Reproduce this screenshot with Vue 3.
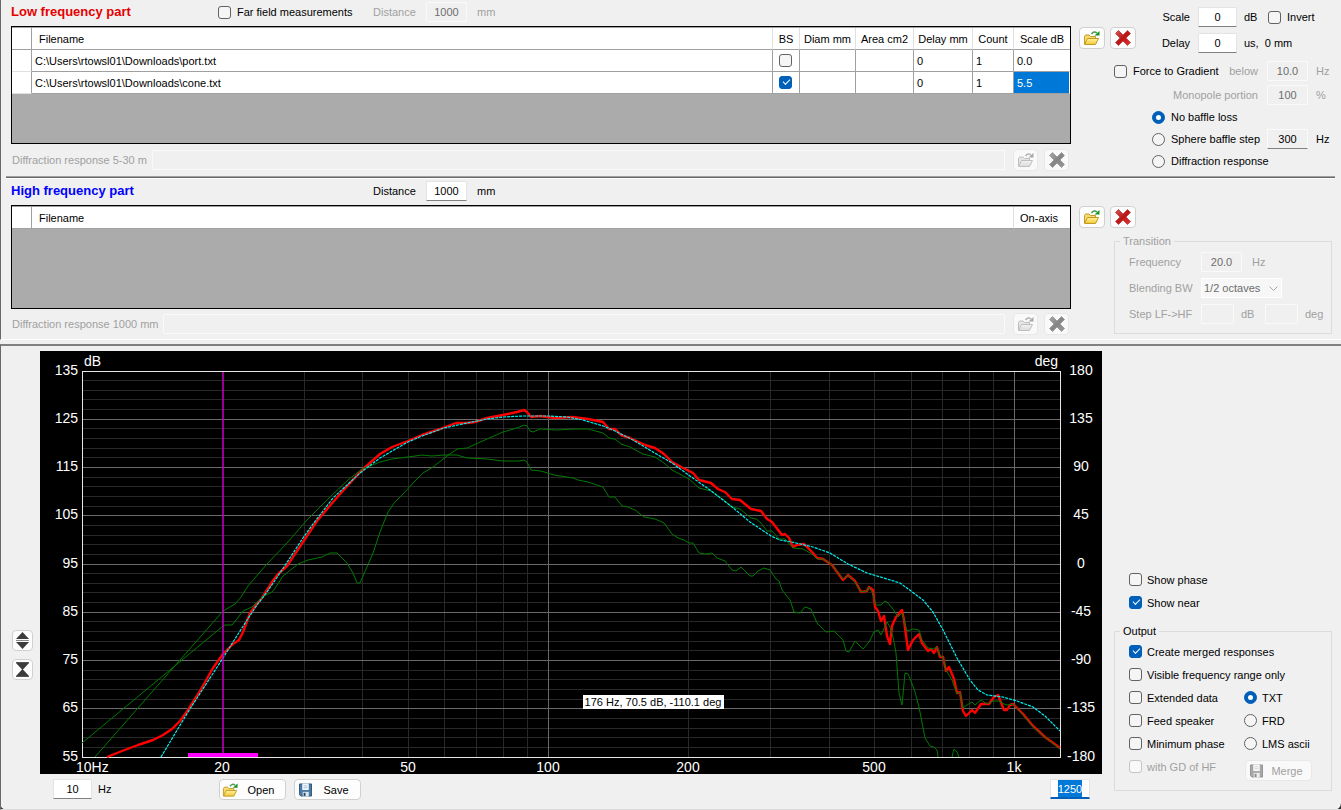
<script setup>
import { onMounted, ref } from 'vue'

const lowRows = ref([
  { file: 'C:\\Users\\rtowsl01\\Downloads\\port.txt', bs: false, diam: '', area: '', delay: '0', count: '1', scale: '0.0' },
  { file: 'C:\\Users\\rtowsl01\\Downloads\\cone.txt', bs: true, diam: '', area: '', delay: '0', count: '1', scale: '5.5' },
])
const baffle = ref('none')
const format = ref('TXT')
const baffleOptions = [
  { id: 'none', label: 'No baffle loss' },
  { id: 'sphere', label: 'Sphere baffle step' },
  { id: 'diffraction', label: 'Diffraction response' },
]
const outputRows = ref([
  { id: 'merged', label: 'Create merged responses', checked: true },
  { id: 'visible', label: 'Visible frequency range only', checked: false },
  { id: 'extended', label: 'Extended data', checked: false, format: 'TXT' },
  { id: 'feed', label: 'Feed speaker', checked: false, format: 'FRD' },
  { id: 'minimum', label: 'Minimum phase', checked: false, format: 'LMS ascii' },
  { id: 'gd', label: 'with GD of HF', checked: false, disabled: true, merge: true },
])

// Plot area, in chart units
const L = 82, R = 1060, T = 371, B = 757
const xOf = (f) => Math.floor(L + ((R - L) * Math.log10(f / 10)) / Math.log10(125))
const yOf = (db) => Math.floor(T + ((135 - db) * (B - T)) / 80)
const minorY = []
for (let d = 57; d < 135; d += 2) if (d % 10 !== 5) minorY.push(yOf(d))
const majorY = [125, 115, 105, 95, 85, 75, 65].map(yOf)
const minorX = [30, 40, 50, 60, 70, 80, 90, 200, 300, 400, 500, 600, 700, 800, 900].map(xOf)
const majorX = [100, 1000].map(xOf)
const scale = [
  [135, '180'], [125, '135'], [115, '90'], [105, '45'], [95, '0'],
  [85, '-45'], [75, '-90'], [65, '-135'], [55, '-180'],
]
const freqs = [[20, '20'], [50, '50'], [100, '100'], [200, '200'], [500, '500'], [1000, '1k']]

const merged = '107,757 122,751 138,745 153,740 163,735 172,729 180,721 188,710 200,691 213,668 223,654 233,644 239,640 243,632 250,613 256,605 262,598 272,582 278,574 287,566 303,542 317,521 333,502 350,483 362,470 380,454 392,447 408,441 422,435 440,429 456,423 467,423 475,422 487,418 503,415 517,412 524,410 527,412 531,417 540,416 555,418 572,417 588,419 603,422 609,429 615,429 621,435 630,438 645,445 655,448 664,454 672,462 683,468 693,473 699,480 711,483 718,489 725,492 732,499 740,500 751,509 761,511 767,519 772,522 782,535 785,534 789,538 793,547 797,545 804,544 813,553 817,558 823,559 832,565 843,580 848,575 855,581 861,592 867,591 869,587 873,590 875,607 878,611 881,621 884,616 887,636 890,644 892,626 896,617 902,610 904,620 908,650 913,640 919,634 922,643 928,651 931,649 934,653 937,647 940,657 943,657 946,671 949,667 954,679 957,693 960,692 963,711 966,716 972,710 975,713 981,704 989,704 994,697 998,695 1004,710 1007,710 1010,705 1013,704 1023,714 1033,726 1045,737 1060,748'
const target = '161,757 188,712 223,658 233,642 247,620 257,605 267,592 282,570 303,538 313,524 333,498 360,473 380,458 392,451 408,442 422,436 444,428 467,423 487,419 503,417 523,416 548,416 567,417 583,420 603,426 615,431 633,440 653,452 672,463 690,476 710,490 732,507 750,522 771,536 780,540 792,542 813,547 830,553 848,564 867,573 887,579 900,583 911,591 923,600 933,612 943,630 957,658 970,680 978,690 987,695 1003,697 1017,701 1033,707 1045,716 1060,731'
const port = '95,757 223,611 235,604 241,597 248,586 267,564 287,543 307,520 330,497 348,480 362,469 370,466 380,462 392,459 408,457 422,455 432,456 444,455 457,455 467,458 487,459 503,461 520,461 524,460 527,462 531,470 541,471 554,475 573,478 578,480 588,482 597,485 603,487 609,497 615,497 622,506 628,507 635,510 644,517 655,519 664,523 672,534 678,538 684,540 689,543 693,543 699,553 706,554 712,553 717,558 725,561 732,570 736,571 741,567 750,576 753,576 758,571 764,568 770,570 776,579 779,581 782,590 790,600 794,612 800,613 805,607 811,609 817,623 826,632 834,631 843,640 846,651 849,652 855,641 863,649 869,642 874,632 878,630 881,635 887,622 890,627 893,637 896,653 899,693 902,705 905,673 908,674 911,681 915,692 919,707 925,738 930,746 934,747 937,750 938,757'
const portTail = '952,757 954,749 957,752 959,757'
const cone = '82,743 223,626 225,625 232,625 237,619 243,611 252,607 262,597 272,592 276,587 283,576 298,564 308,560 322,557 330,553 337,553 347,563 353,573 357,583 360,583 373,553 380,532 388,512 395,502 405,492 413,483 423,473 433,467 447,456 457,449 467,448 487,439 503,432 517,428 524,425 527,426 530,431 533,432 540,429 557,430 573,429 588,429 603,433 609,438 615,439 621,444 630,447 643,454 655,457 664,463 672,470 689,479 699,488 711,491 725,501 732,507 740,509 751,518 756,519 761,523 767,531 772,531 779,539 785,539 793,548 803,549 812,554 817,559 823,559 832,565 843,579 848,575 855,582 861,592 867,591 869,587 872,592 876,605 881,605 885,601 888,603 893,609 898,617 902,613 904,620 907,631 913,629 919,630 922,640 928,648 933,649 937,647 940,656 943,657 946,670 952,680 957,694 960,692 963,708 967,705 972,702 975,705 981,700 987,704 993,701 999,701 1004,704 1007,705 1013,704 1023,715 1033,727 1045,737 1060,749'

const maxFreq = ref(null)
onMounted(() => {
  maxFreq.value.focus()
  maxFreq.value.select()
})
</script>

<template>
  <svg class="sprite" aria-hidden="true">
    <linearGradient id="gold" x1="0" y1="0" x2="0" y2="1">
      <stop offset="0" stop-color="#fff3a0" /><stop offset="1" stop-color="#f2c832" />
    </linearGradient>
    <linearGradient id="crimson" x1="0" y1="0" x2="1" y2="1">
      <stop offset="0" stop-color="#d95a5a" /><stop offset="0.5" stop-color="#b81616" /><stop offset="1" stop-color="#ee3434" />
    </linearGradient>
    <symbol id="folder" viewBox="0 0 18 16">
      <path d="M1.500 14V6.500L2.500 5H6L7.500 6.500H12.500V9" fill="#f5dc6c" stroke="#c39a26" />
      <path d="M4.500 8.500H15.500L12.500 14.500H1.500Z" fill="url(#gold)" stroke="#c39a26" stroke-linejoin="round" />
      <path d="M8.500 4Q11 .5 14 3" fill="none" stroke="#4a9b52" stroke-width="1.500" />
      <path d="M16.500 1V5.500H11.500Z" fill="#12961c" />
    </symbol>
    <symbol id="cross" viewBox="0 0 18 18">
      <path d="M4.500 1.500L9 6L13.500 1.500L16.500 4.500L12 9L16.500 13.500L13.500 16.500L9 12L4.500 16.500L1.500 13.500L6 9L1.500 4.500Z" fill="url(#crimson)" stroke="#c94848" stroke-linejoin="round" />
    </symbol>
    <symbol id="floppy" viewBox="0 0 14 14">
      <path d="M.5 .5H13.500V13.500H2L.5 12Z" fill="#4a7ba6" stroke="#28506f" />
      <path d="M3.500 0H10.500V7H3.500Z" fill="#f2f7fb" />
      <path d="M5 2.500H9M5 4.500H9" stroke="#a9c2d6" />
      <path d="M4 9H10.500V14H4Z" fill="#dce6ee" />
      <path d="M5 10H7V13.500H5Z" fill="#264a68" />
    </symbol>
  </svg>

  <main class="window">
    <div class="panel sources">
      <section class="part">
        <div class="main-col">
          <div class="part-head">
            <h2 class="low">Low frequency part</h2>
            <label class="check"><input type="checkbox">Far field measurements</label>
            <div class="distance off">
              <label for="lf-distance">Distance</label>
              <input id="lf-distance" class="field" value="1000" disabled>
              <span>mm</span>
            </div>
          </div>
          <div class="grid-box low-box">
            <table>
              <colgroup>
                <col class="w-row"><col><col class="w-bs"><col class="w-diam"><col class="w-area"><col class="w-delay"><col class="w-count"><col class="w-scale">
              </colgroup>
              <thead>
                <tr>
                  <th></th><th class="name">Filename</th><th>BS</th><th>Diam mm</th><th>Area cm2</th><th>Delay mm</th><th>Count</th><th>Scale dB</th>
                </tr>
              </thead>
              <tbody>
                <tr v-for="(row, i) in lowRows" :key="row.file">
                  <td class="handle"></td>
                  <td>{{ row.file }}</td>
                  <td class="tick"><input v-model="row.bs" type="checkbox" aria-label="BS"></td>
                  <td>{{ row.diam }}</td>
                  <td>{{ row.area }}</td>
                  <td>{{ row.delay }}</td>
                  <td>{{ row.count }}</td>
                  <td :class="{ picked: i === 1 }">{{ row.scale }}</td>
                </tr>
              </tbody>
            </table>
          </div>
          <div class="diffraction">
            <label for="lf-diff">Diffraction response 5-30 m</label>
            <input id="lf-diff" class="field" disabled>
            <button class="tool" disabled aria-label="Open diffraction response"><svg class="ico"><use href="#folder" /></svg></button>
            <button class="tool" disabled aria-label="Clear diffraction response"><svg class="ico"><use href="#cross" /></svg></button>
          </div>
        </div>

        <div class="side-col">
          <div class="side-top">
            <div class="tools">
              <button class="tool" aria-label="Open files"><svg class="ico"><use href="#folder" /></svg></button>
              <button class="tool" aria-label="Remove file"><svg class="ico"><use href="#cross" /></svg></button>
            </div>
            <div class="adjust">
              <label for="scale">Scale</label>
              <input id="scale" class="field" value="0">
              <span>dB</span>
              <label class="check"><input type="checkbox">Invert</label>
              <label for="delay">Delay</label>
              <input id="delay" class="field" value="0">
              <span class="wide">us,&nbsp; 0 mm</span>
            </div>
          </div>
          <div class="baffle">
            <div class="line tall">
              <div class="lead">
                <label class="check"><input type="checkbox">Force to Gradient</label>
                <label class="off" for="below">below</label>
              </div>
              <input id="below" class="field" value="10.0" disabled>
              <span class="off">Hz</span>
            </div>
            <div class="line">
              <div class="lead end"><label class="off" for="mono">Monopole portion</label></div>
              <input id="mono" class="field" value="100" disabled>
              <span class="off">%</span>
            </div>
            <div v-for="o in baffleOptions" :key="o.id" class="line">
              <div class="lead option">
                <label class="check"><input v-model="baffle" type="radio" name="baffle" :value="o.id">{{ o.label }}</label>
              </div>
              <template v-if="o.id === 'sphere'">
                <input class="field idle" value="300" aria-label="Sphere baffle step frequency" readonly>
                <span>Hz</span>
              </template>
            </div>
          </div>
        </div>
      </section>

      <hr class="groove">

      <section class="part">
        <div class="main-col">
          <div class="part-head">
            <h2 class="high">High frequency part</h2>
            <span></span>
            <div class="distance">
              <label for="hf-distance">Distance</label>
              <input id="hf-distance" class="field" value="1000">
              <span>mm</span>
            </div>
          </div>
          <div class="grid-box high-box">
            <table>
              <colgroup><col class="w-row"><col><col class="w-scale"></colgroup>
              <thead>
                <tr><th></th><th class="name">Filename</th><th class="axis">On-axis</th></tr>
              </thead>
            </table>
          </div>
          <div class="diffraction short">
            <label for="hf-diff">Diffraction response 1000 mm</label>
            <input id="hf-diff" class="field" disabled>
            <button class="tool" disabled aria-label="Open diffraction response"><svg class="ico"><use href="#folder" /></svg></button>
            <button class="tool" disabled aria-label="Clear diffraction response"><svg class="ico"><use href="#cross" /></svg></button>
          </div>
        </div>

        <div class="side-col">
          <div class="tools">
            <button class="tool" aria-label="Open files"><svg class="ico"><use href="#folder" /></svg></button>
            <button class="tool" aria-label="Remove file"><svg class="ico"><use href="#cross" /></svg></button>
          </div>
          <fieldset class="transition off" disabled>
            <legend>Transition</legend>
            <div class="t-row">
              <label for="t-freq">Frequency</label>
              <input id="t-freq" class="field" value="20.0">
              <span>Hz</span>
            </div>
            <div class="t-row">
              <label for="t-bw">Blending BW</label>
              <div class="combo">
                <select id="t-bw"><option>1/2 octaves</option></select>
                <svg viewBox="0 0 9 6"><path d="M.5 .5L4.500 4.500L8.500 .5" fill="none" stroke="#a8a8a8" /></svg>
              </div>
            </div>
            <div class="t-row">
              <label for="t-db">Step LF-&gt;HF</label>
              <input id="t-db" class="field small">
              <span class="unit">dB</span>
              <input class="field small" aria-label="Step phase">
              <span class="unit">deg</span>
            </div>
          </fieldset>
        </div>
      </section>
    </div>

    <section class="panel result">
      <div class="zoomers">
        <button class="zoomer" aria-label="Expand range">
          <svg viewBox="0 0 15 17"><path d="M7.500 0L14 7H1ZM1 10H14L7.500 17Z" fill="#3c3c3c" /><path d="M1 8.500H14" stroke="#888" /></svg>
        </button>
        <button class="zoomer" aria-label="Compress range">
          <svg viewBox="0 0 15 17"><path d="M1 2H14L7.500 9ZM7.500 8L14 15H1Z" fill="#3c3c3c" /><path d="M1 1.500H14M1 15.500H14" stroke="#555" /></svg>
        </button>
      </div>

      <svg class="chart" viewBox="40 351 1062 423" role="img" aria-label="Frequency response">
        <rect x="40" y="351" width="1062" height="423" fill="#000" />
        <g class="crisp" stroke="#282828">
          <path v-for="y in minorY" :key="'a' + y" :d="`M${L} ${y + 0.5}H${R}`" />
          <path v-for="x in minorX" :key="'b' + x" :d="`M${x + 0.5} ${T}V${B}`" />
        </g>
        <g class="crisp" stroke="#6a6a6a">
          <path v-for="y in majorY" :key="'c' + y" :d="`M${L} ${y + 0.5}H${R}`" />
          <path v-for="x in majorX" :key="'d' + x" :d="`M${x + 0.5} ${T}V${B}`" />
        </g>
        <rect class="crisp" x="82.500" y="371.500" width="978" height="386" fill="none" stroke="#e6e6e6" />
        <g fill="none" stroke-linejoin="round">
          <polyline :points="merged" stroke="#f00" stroke-width="2.400" />
          <polyline :points="port" stroke="#007a00" />
          <polyline :points="portTail" stroke="#007a00" />
          <polyline :points="cone" stroke="#007a00" />
          <polyline :points="target" stroke="#00f0f0" stroke-width="1.200" stroke-dasharray="3 1" />
        </g>
        <path class="crisp" d="M223 372V753" stroke="#c800c8" stroke-width="2" stroke-opacity="0.750" />
        <path class="crisp" d="M188 755H258" stroke="#f0f" stroke-width="4" />
        <g class="axis-text">
          <text x="84" y="366">dB</text>
          <text x="1058" y="366" text-anchor="end">deg</text>
          <template v-for="[db, deg] in scale" :key="db">
            <text x="78" :y="yOf(db) + 4" text-anchor="end">{{ db }}</text>
            <text x="1081" :y="yOf(db) + 4" text-anchor="middle">{{ deg }}</text>
          </template>
          <text x="76" y="772">10Hz</text>
          <text v-for="[f, name] in freqs" :key="f" :x="xOf(f)" y="772" text-anchor="middle">{{ name }}</text>
        </g>
        <rect x="583" y="695" width="141" height="14" fill="#fff" />
        <text class="readout" x="653" y="706" text-anchor="middle">176 Hz, 70.5 dB, -110.1 deg</text>
      </svg>

      <div class="range">
        <input class="field" value="10" aria-label="Minimum frequency">
        <span>Hz</span>
        <button class="action open"><svg class="ico"><use href="#folder" /></svg><span>Open</span></button>
        <button class="action"><svg class="ico disk"><use href="#floppy" /></svg><span>Save</span></button>
        <input ref="maxFreq" class="field last" value="1250" aria-label="Maximum frequency">
      </div>

      <aside class="options">
        <label class="check"><input type="checkbox">Show phase</label>
        <label class="check"><input type="checkbox" checked>Show near</label>
        <fieldset class="output">
          <legend>Output</legend>
          <div v-for="o in outputRows" :key="o.id" class="out-row">
            <label class="check" :class="{ off: o.disabled }"><input v-model="o.checked" type="checkbox" :disabled="o.disabled">{{ o.label }}</label>
            <label v-if="o.format" class="check"><input v-model="format" type="radio" name="format" :value="o.format">{{ o.format }}</label>
            <button v-if="o.merge" class="action merge off" disabled><svg class="ico disk"><use href="#floppy" /></svg><span>Merge</span></button>
          </div>
        </fieldset>
      </aside>
    </section>
  </main>
</template>

<style>
html { background: #2a2a2a; }
body { margin: 0; }
</style>

<style scoped>
.window, .window * { box-sizing: border-box; }
.window {
  min-height: 100vh;
  background: #f0f0f0;
  border-radius: 0 0 7px 7px;
  color: #000;
  font: 11px/14px "Liberation Sans", Arial, sans-serif;
  white-space: nowrap;
}
.sprite { position: absolute; width: 0; height: 0; }
.window input, .window button, .window select { font: inherit; color: inherit; margin: 0; }
.off, .window button.off { color: #a0a0a0; }
.panel { border-left: 1px solid #696969; }
.sources { border-bottom: 1px solid #fff; }
.part { display: grid; grid-template-columns: minmax(0, 1fr) 270px; padding-left: 10px; }
.part-head { display: grid; grid-template-columns: 207px 155px auto; align-items: center; height: 26px; padding-bottom: 2px; }
h2 { margin: 0; font-size: 13px; line-height: 16px; font-weight: bold; }
.low { color: #e60000; }
.high { color: #00f; }
.distance { display: flex; align-items: center; }
.distance label { width: 53px; }
.distance span { margin-left: 10px; }

.field {
  width: 41px; height: 20px; padding: 0; text-align: center; background: #fff;
  border: 1px solid #e4e4e4; border-bottom-color: #808080; border-radius: 1px; outline: none;
}
.window .field:disabled { background: #f0f0f0; border-color: #fafafa; color: #6d6d6d; }
.field.idle { background: #f0f0f0; border-color: #fafafa; border-bottom-color: #808080; }
.field::selection { background: #0078d7; color: #fff; }

.check { display: flex; align-items: center; gap: 6px; }
input[type="checkbox"], input[type="radio"] {
  appearance: none; position: relative; flex: none; width: 13px; height: 13px;
  border: 1px solid #626262; border-radius: 3px; background: #f5f5f5;
}
input[type="radio"] { border-radius: 50%; }
input:checked { background: #005fb8; border-color: #005fb8; }
input[type="checkbox"]:checked::after {
  content: ""; position: absolute; left: 3px; top: 2px; width: 6px; height: 3px;
  border: solid #fff; border-width: 0 0 1px 1px; transform: rotate(-45deg);
}
input[type="radio"]:checked::after {
  content: ""; position: absolute; inset: 3px; border-radius: 50%; background: #fff;
}
input[type="checkbox"]:disabled { border-color: #c5c5c5; background: #f9f9f9; }

.grid-box { border: 1px solid #000; background: #ababab; }
.low-box { height: 118px; }
.high-box { height: 104px; }
table { width: 100%; table-layout: fixed; border-collapse: separate; border-spacing: 0; border-top: 1px solid #a0a0a0; }
th, td { height: 22px; padding: 0 0 0 3px; background: #fff; border-right: 1px solid #a0a0a0; border-bottom: 1px solid #a0a0a0; text-align: left; font-weight: normal; }
th { padding: 0; text-align: center; border-right-color: #e0e0e0; }
th:first-child { border-right-color: #a0a0a0; }
th:last-child { border-right: 0; }
th.name { text-align: left; padding-left: 7px; }
th.axis { padding-right: 6px; }
td:last-child { border-right-color: #fff; }
td.handle { border-bottom-color: #e0e0e0; }
td.tick { padding: 0 2px 0 0; }
td.tick input { display: block; margin: 0 auto; }
td.picked { background: #0078d7; color: #fff; }
.w-row { width: 20px; }
.w-bs { width: 27px; }
.w-diam { width: 56px; }
.w-area { width: 58px; }
.w-delay { width: 59px; }
.w-count { width: 41px; }
.w-scale { width: 56px; }

.diffraction { display: flex; align-items: center; height: 32px; padding-right: 2px; color: #a0a0a0; }
.diffraction.short { height: 30px; }
.diffraction label { width: 141px; padding-left: 1px; }
.diffraction.short label { width: 152px; }
.diffraction .field { flex: 1; min-width: 0; margin-right: 8px; }
.diffraction .tool + .tool { margin-left: 6px; }

.tool, .action, .zoomer {
  display: flex; align-items: center; justify-content: center; padding: 0;
  background: #fdfdfd; border: 1px solid #d0d0d0; border-radius: 4px;
}
.tool { width: 26px; height: 22px; }
.tool .ico { width: 18px; height: 18px; }
.tool:disabled, .action:disabled { background: #f9f9f9; border-color: #e8e8e8; }
button:disabled .ico { filter: grayscale(1); opacity: 0.6; }
.diffraction .tool { width: 25px; }
.tools { display: flex; gap: 5px; padding: 27px 0 0 8px; }

.side-top { display: flex; height: 53px; }
.adjust { display: grid; grid-template-columns: 39px 39px 17px auto; grid-auto-rows: 20px; gap: 6px 7px; align-items: center; padding: 7px 0 0 16px; }
.adjust > label:not(.check) { text-align: right; padding-right: 1px; }
.adjust .field { width: 39px; }
.adjust .wide { grid-column: span 2; }
.baffle { padding: 6px 0 0 43px; }
.line { display: flex; align-items: center; height: 22px; }
.line.tall { height: 24px; }
.line.tall + .line { height: 23px; }
.lead { display: flex; justify-content: space-between; width: 144px; margin-right: 9px; }
.lead.end { justify-content: flex-end; }
.lead.option { padding-left: 38px; }
.line > span { margin-left: 8px; }

.groove { height: 3px; margin: 0 6px 0 5px; border: 0; border-top: 1px solid #a0a0a0; border-bottom: 1px solid #fff; background: #696969; }

fieldset { margin: 0; min-width: 0; border: 1px solid #dcdcdc; }
legend { padding: 0 3px; line-height: 13px; }
.transition { margin: 7px 9px 0 43px; height: 99px; padding: 1px 0 0 14px; }
.transition legend, .output legend { margin-left: -9px; }
.t-row { display: flex; align-items: center; height: 26px; }
.t-row label { width: 72px; }
.t-row > span { margin-left: 10px; }
.t-row .unit { width: 24px; margin-left: 7px; }
.field.small { width: 33px; }
.combo { position: relative; }
.combo select { appearance: none; width: 81px; height: 20px; padding: 0 2px; border: 1px solid #fff; background: #f7f7f7; color: #6d6d6d; opacity: 1; }
.combo svg { position: absolute; right: 4px; top: 8px; width: 9px; height: 6px; }

.result {
  display: grid; grid-template-columns: 39px minmax(0, 1fr) 239px; grid-template-rows: auto 35px;
  margin-top: 4px; padding-top: 5px; border-top: 2px solid #808080; border-bottom: 1px solid #dcdcdc;
}
.zoomers { display: flex; flex-direction: column; justify-content: flex-end; gap: 8px; padding: 0 0 94px 11px; }
.zoomer { width: 21px; height: 21px; }
.zoomer svg { width: 15px; height: 17px; }
.chart { display: block; width: 100%; height: auto; }
.crisp { shape-rendering: crispEdges; }
.axis-text { fill: #fff; font-size: 14px; }
.readout { fill: #000; font-size: 11px; }

.range { grid-column: 2; grid-row: 2; display: flex; align-items: flex-start; padding: 5px 12px 0 13px; line-height: 20px; }
.range > span { width: 121px; margin-left: 6px; }
.range .field { width: 39px; }
.range .last { width: 40px; margin-left: auto; border-bottom: 2px solid #005fb8; }
.action { width: 67px; height: 21px; padding: 0 2px; justify-content: flex-start; }
.action .ico { width: 17px; height: 16px; flex: none; }
.action .disk { width: 13px; height: 14px; margin: 0 2px; }
.action span { flex: 1; text-align: center; }
.action.open { margin-right: 8px; }

.options { grid-column: 3; grid-row: 1 / 3; display: flex; flex-direction: column; justify-content: flex-end; padding: 0 9px 18px 12px; }
.options .check { gap: 5px; }
.options > .check { height: 23px; padding-left: 15px; }
.output { margin-top: 11px; padding: 2px 0 12px 14px; }
.out-row { display: grid; grid-template-columns: 115px auto; align-items: center; height: 23px; }
.merge { align-self: start; margin: 5px 0 -3px 1px; }
.out-row .merge { margin: 5px 0 -3px 1px; }
</style>
